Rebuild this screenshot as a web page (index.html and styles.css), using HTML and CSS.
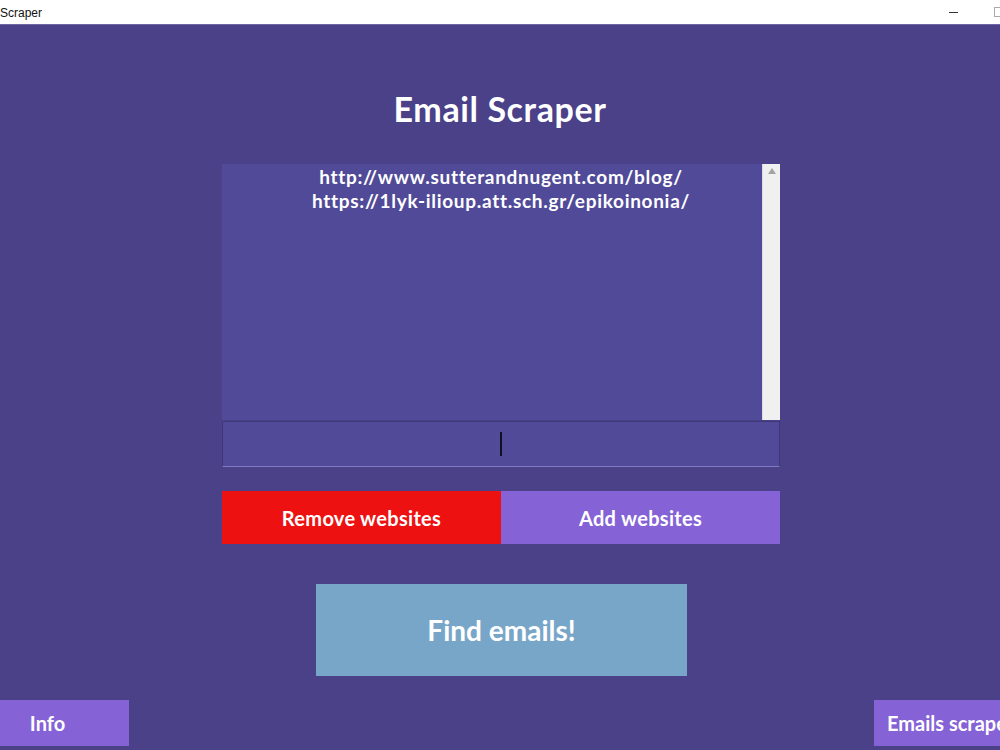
FILE: index.html
```html
<!DOCTYPE html>
<html lang="en">
<head>
<meta charset="UTF-8">
<meta name="viewport" content="width=device-width, initial-scale=1.0">
<title>Scraper</title>
<link rel="stylesheet" href="styles.css">
</head>
<body>
<div class="titlebar">
  <span class="titlebar-name">Scraper</span>
  <div class="titlebar-controls">
    <span class="ctl-min"></span>
    <span class="ctl-max"></span>
  </div>
</div>

<div class="app">
  <h1 class="heading">Email Scraper</h1>

  <div class="site-list">
    <div class="site-lines">
      <div>http://www.sutterandnugent.com/blog/</div>
      <div>https://1lyk-ilioup.att.sch.gr/epikoinonia/</div>
    </div>
    <div class="scrollbar">
      <svg width="10" height="8" viewBox="0 0 10 8"><polygon points="5,1 9,7 1,7" fill="#a3a3a3"/></svg>
    </div>
  </div>

  <div class="site-input"><span class="caret"></span></div>

  <div class="site-buttons">
    <div class="btn btn-remove">Remove websites</div>
    <div class="btn btn-add">Add websites</div>
  </div>

  <div class="btn btn-find">Find emails!</div>

  <div class="bottom-row">
    <div class="btn btn-info">Info</div>
    <div class="btn btn-scraped">Emails scraped</div>
  </div>
</div>
</body>
</html>
```

FILE: styles.css
```css
body {
  margin: 0;
  padding: 0;
  width: 1000px;
  height: 750px;
  overflow: hidden;
  font-family: Lato, "Open Sans", sans-serif;
  background-color: #4a4189;
}

/* window title bar */
.titlebar {
  height: 24px;
  background-color: #ffffff;
  border-bottom: 1px solid #6e67a6;
  display: flex;
  align-items: center;
  justify-content: space-between;
}

.titlebar-name {
  font-family: "Liberation Sans", Arial, sans-serif;
  font-size: 12px;
  color: #111111;
  padding-top: 1px;
}

.titlebar-controls {
  display: flex;
  align-items: center;
  gap: 36px;
  margin-right: -4px;
}

.ctl-min {
  width: 9px;
  height: 1px;
  background-color: #333333;
}

.ctl-max {
  width: 8px;
  height: 8px;
  border: 1px solid #aaaaaa;
}

.app {
  display: flex;
  flex-direction: column;
  align-items: center;
  height: 725px;
}

.heading {
  margin: 63px 0 0;
  height: 76px;
  font-size: 34px;
  font-weight: 700;
  color: #ffffff;
  letter-spacing: 0.6px;
}

/* list of websites */
.site-list {
  display: flex;
  width: 558px;
  height: 256px;
  margin-left: 2px;
}

.site-lines {
  flex: 1;
  background-color: #514a98;
  color: #ffffff;
  font-size: 19px;
  font-weight: 700;
  letter-spacing: 0.7px;
  line-height: 24px;
  text-align: center;
  padding-top: 1px;
  padding-left: 18px; /* keeps the lines centred on the whole box, scrollbar included */
}

.scrollbar {
  width: 18px;
  background-color: #f0f0f0;
  border-left: 1px solid #dcdcdc;
  box-sizing: border-box;
  display: flex;
  justify-content: center;
  padding-top: 3px;
}

.site-input {
  width: 558px;
  height: 46px;
  box-sizing: border-box;
  margin-top: 1px;
  margin-left: 2px;
  background-color: #514a98;
  border: 1px solid #3f3878;
  border-bottom: 1px solid #7f79c0;
  display: flex;
  align-items: center;
  justify-content: center;
}

.caret {
  width: 2px;
  height: 24px;
  background-color: #111122;
}

.btn {
  color: #ffffff;
  font-weight: 700;
  display: flex;
  align-items: center;
  justify-content: center;
}

.site-buttons {
  display: flex;
  width: 558px;
  height: 53px;
  margin-top: 24px;
  margin-left: 2px;
}

.site-buttons .btn {
  flex: 1;
  font-size: 20px;
  letter-spacing: 0.3px;
}

.btn-remove {
  background-color: #ee1111;
}

.btn-add {
  background-color: #8562d6;
}

.btn-find {
  width: 371px;
  height: 92px;
  margin-top: 40px;
  margin-left: 3px;
  font-size: 28px;
  background-color: #78a6c8;
}

.bottom-row {
  display: flex;
  justify-content: space-between;
  align-self: stretch;
  margin-top: 24px;
  overflow: hidden;
}

.bottom-row .btn {
  height: 46px;
  font-size: 20px;
  background-color: #8562d6;
}

.btn-info {
  width: 129px;
  padding-right: 34px;
  box-sizing: border-box;
}

.btn-scraped {
  width: 126px;
  justify-content: flex-start;
  padding-left: 13px;
  box-sizing: border-box;
  white-space: nowrap;
  overflow: hidden;
}
```
